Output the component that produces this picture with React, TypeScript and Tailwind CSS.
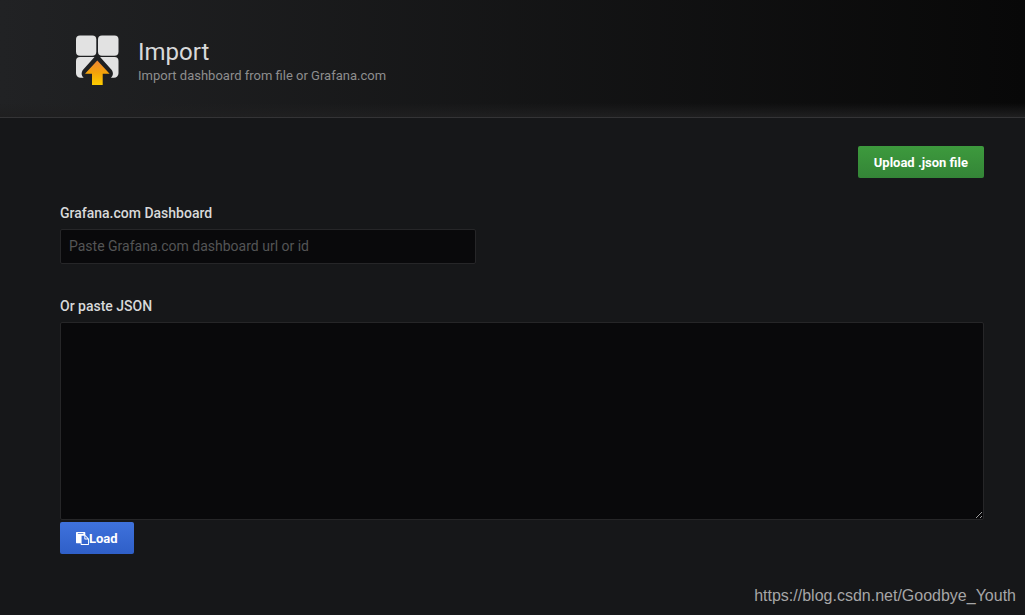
import React from "react";

function ImportIcon() {
  return (
    <svg viewBox="0 0 44 50" className="h-[50px] w-11 shrink-0" aria-hidden="true">
      <defs>
        <linearGradient id="arrow" x1="0" y1="0" x2="0" y2="1">
          <stop offset="0" stopColor="#ed8535" />
          <stop offset="0.5" stopColor="#f4a30a" />
          <stop offset="1" stopColor="#fccc00" />
        </linearGradient>
      </defs>
      <g fill="#e2e2e2">
        <rect x="1" y="0.5" width="20.3" height="20.3" rx="4" />
        <rect x="23" y="0.5" width="20.5" height="20.3" rx="4" />
        <path d="M5 22H19.5L8.3 34.5C5.9 37.3 6.2 41 8.8 42.7H5.5A4.5 4.5 0 0 1 1 38.2V26A4 4 0 0 1 5 22Z" />
        <path d="M25.1 22H39.5A4 4 0 0 1 43.5 26V38.2A4.5 4.5 0 0 1 39 42.7H35.8C38.4 41 38.7 37.3 36.3 34.5Z" />
      </g>
      <path d="M22.3 25.4L34.6 38.8H27.7V50H17V38.8H10Z" fill="url(#arrow)" />
    </svg>
  );
}

function PasteIcon() {
  return (
    <svg viewBox="0 0 1792 1792" className="size-[13px] shrink-0" fill="currentColor" aria-hidden="true">
      <path d="M768 1664h896v-640h-416q-40 0-68-28t-28-68v-416h-384v1152zm256-1440v-64q0-13-9.5-22.5t-22.5-9.5h-704q-13 0-22.5 9.5t-9.5 22.5v64q0 13 9.5 22.5t22.5 9.5h704q13 0 22.5-9.5t9.5-22.5zm256 672h299l-299-299v299zm512 128v672q0 40-28 68t-68 28h-960q-40 0-68-28t-28-68v-160h-544q-40 0-68-28t-28-68v-1344q0-40 28-68t68-28h1088q40 0 68 28t28 68v328q21 13 36 28l408 408q28 28 48 76t20 88z" />
    </svg>
  );
}

export default function App() {
  return (
    <div className="flex min-h-screen flex-col bg-[#161719] font-[Roboto,sans-serif] text-sm text-[#d8d9da]">
      <header className="border-b border-[#343436] bg-[linear-gradient(to_top,#1f1f20,#1f1f2000_14px),linear-gradient(to_right,#212224,#080808)] pt-[35px] pr-10 pb-8 pl-[75px]">
        <div className="flex gap-[19px]">
          <ImportIcon />
          <div className="pt-0.5">
            <h1 className="text-2xl leading-[30px]">Import</h1>
            <p className="text-[13px] leading-[18px] text-[#8e8e8e]">
              Import dashboard from file or Grafana.com
            </p>
          </div>
        </div>
      </header>

      <main className="flex flex-col pt-7 pr-[41px] pl-[60px]">
        <button
          type="button"
          className="h-8 self-end rounded-xs bg-linear-to-b from-[#3d9a3d] to-[#348537] px-4 pt-0.5 text-[13px] font-bold text-white"
        >
          Upload .json file
        </button>

        <label htmlFor="dashboard" className="mt-[25px] leading-5 font-medium">
          Grafana.com Dashboard
        </label>
        <input
          id="dashboard"
          type="text"
          placeholder="Paste Grafana.com dashboard url or id"
          className="mt-1.5 h-[35px] w-[45%] rounded-xs border border-[#262628] bg-[#09090b] px-2 pb-0.5 placeholder:text-[#545556]"
        />

        <label htmlFor="json" className="mt-8 leading-5 font-medium">
          Or paste JSON
        </label>
        <textarea
          id="json"
          className="mt-1.5 h-[198px] w-full resize rounded-xs border border-[#262628] bg-[#09090b] p-2"
        />
        <button
          type="button"
          className="mt-0.5 flex h-8 items-center self-start rounded-xs bg-linear-to-b from-[#3f72dc] to-[#2f5fc8] px-4 text-[13px] font-bold text-white"
        >
          <PasteIcon />
          <span className="pt-0.5">Load</span>
        </button>
      </main>

      <footer className="mt-auto pr-[9px] pb-[7px] text-right font-['Liberation_Sans',sans-serif] text-base text-[#a6a6a7]">
        https://blog.csdn.net/Goodbye_Youth
      </footer>
    </div>
  );
}
